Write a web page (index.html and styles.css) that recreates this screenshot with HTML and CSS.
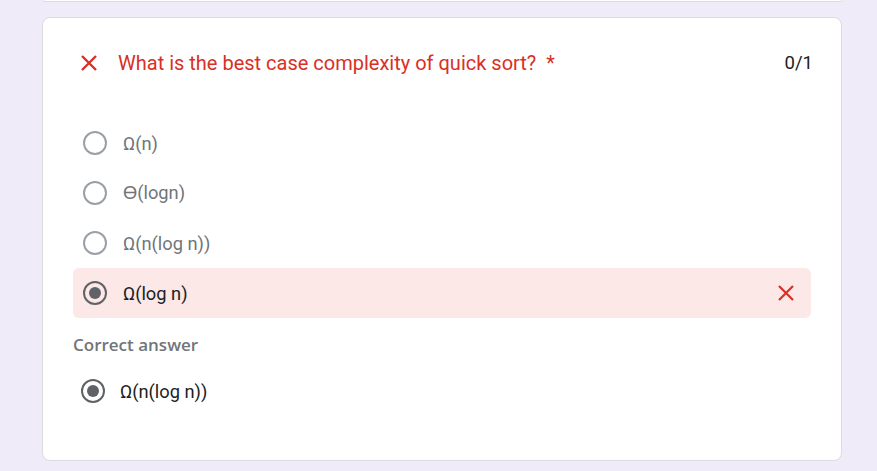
FILE: index.html
```html
<!DOCTYPE html>
<html>
<head>
<meta charset="utf-8">
<link rel="stylesheet" href="styles.css">
</head>
<body>
<div class="prev-card"></div>
<div class="card">
  <div class="q-header">
    <svg class="q-x" width="18" height="18" viewBox="0 0 18 18"><path d="M2 2 L16 16 M16 2 L2 16" stroke="#d93025" stroke-width="2.4" fill="none"/></svg>
    <div class="q-title">What is the best case complexity of quick sort? <span class="star">*</span></div>
    <div class="q-score">0/1</div>
  </div>
  <div class="options">
    <div class="opt"><span class="radio"></span><span class="opt-text">Ω(n)</span></div>
    <div class="opt"><span class="radio"></span><span class="opt-text">ϴ(logn)</span></div>
    <div class="opt"><span class="radio"></span><span class="opt-text">Ω(n(log n))</span></div>
    <div class="opt opt-wrong"><span class="radio radio-on"></span><span class="opt-text opt-sel">Ω(log n)</span>
      <svg class="wrong-x" width="20" height="20" viewBox="0 0 20 20"><path d="M3 3 L17 17 M17 3 L3 17" stroke="#d93025" stroke-width="2.2" fill="none"/></svg>
    </div>
  </div>
  <div class="correct-label">Correct answer</div>
  <div class="opt opt-correct"><span class="radio radio-on"></span><span class="opt-text opt-sel">Ω(n(log n))</span></div>
</div>
</body>
</html>
```
FILE: styles.css
```css
html, body {
  margin: 0;
  padding: 0;
  background: #f0ebf8;
  font-family: Roboto, "Liberation Sans", sans-serif;
}
body {
  width: 877px;
  height: 471px;
  overflow: hidden;
}
.prev-card {
  margin: 0 35px 0 43px;
  height: 1px;
  background: #fff;
  border: 1px solid #dadce0;
  border-top: none;
  border-radius: 0 0 8px 8px;
}
.card {
  margin: 15px 35px 0 42px;
  height: 444px;
  box-sizing: border-box;
  background: #fff;
  border: 1px solid #dadce0;
  border-radius: 8px;
  padding: 0 30px 0 30px;
}
.q-header {
  display: flex;
  align-items: center;
  height: 36px;
  margin-top: 27px;
}
.q-x {
  margin-left: 7px;
  margin-right: 20px;
}
.q-title {
  flex: 1;
  color: #d93025;
  font-size: 20px;
}
.star {
  margin-left: 5px;
}
.q-score {
  color: #202124;
  font-size: 18.5px;
  margin-right: -2px;
}
.options {
  margin-top: 37px;
}
.opt {
  display: flex;
  align-items: center;
  height: 50px;
  padding-left: 10px;
  border-radius: 6px;
}
.radio {
  width: 24px;
  height: 24px;
  box-sizing: border-box;
  border: 2.5px solid #9aa0a6;
  border-radius: 50%;
  display: flex;
  align-items: center;
  justify-content: center;
  flex: none;
}
.radio-on {
  border-color: #5f6368;
}
.radio-on::after {
  content: "";
  width: 12px;
  height: 12px;
  border-radius: 50%;
  background: #5f6368;
}
.opt-text {
  margin-left: 16px;
  font-size: 18.3px;
  color: #70757a;
}
.opt-sel {
  color: #202124;
}
.opt-wrong {
  background: #fce8e6;
}
.wrong-x {
  margin-left: auto;
  margin-right: 15px;
}
.correct-label {
  margin-top: 17px;
  color: #70757a;
  font-family: "Open Sans", Roboto, sans-serif;
  font-size: 17px;
  font-weight: 600;
  height: 20px;
  line-height: 20px;
}
.opt-correct {
  margin-top: 11px;
  padding-left: 8px;
}
.opt-correct .opt-text {
  margin-left: 15px;
}
```
